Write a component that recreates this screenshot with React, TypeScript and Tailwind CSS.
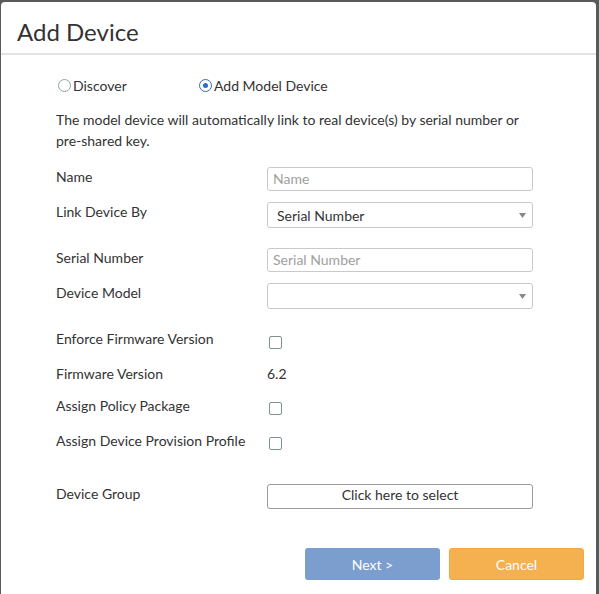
import { useState } from "react";

// Add Device dialog: pick discovery mode, then fill in model device details.

function Radio({ checked, label, onClick }: { checked: boolean; label: string; onClick: () => void }) {
  return (
    <button type="button" onClick={onClick} className="flex items-center h-5 cursor-pointer">
      <span
        className={
          checked
            ? "ml-[2px] w-[13px] h-[13px] rounded-full border-[1.5px] border-[#2f6bc8] flex items-center justify-center"
            : "ml-[2px] w-[13px] h-[13px] rounded-full border-[1.5px] border-[#8fa3a1] flex items-center justify-center"
        }
      >
        {checked && <span className="w-[5px] h-[5px] rounded-full bg-[#2f6bc8]" />}
      </span>
      <span className="ml-[2px] text-[14px] text-[#333]">{label}</span>
    </button>
  );
}

function Checkbox({ className }: { className: string }) {
  const [on, setOn] = useState(false);
  return (
    <button
      type="button"
      onClick={() => setOn(!on)}
      className={`ml-[2px] w-[13px] h-[13px] rounded-[2px] border-[1.5px] border-[#7d9391] bg-white ${className}`}
    >
      {on && <span className="block w-full h-full bg-[#2f6bc8]" />}
    </button>
  );
}

function Caret() {
  return (
    <svg width="7" height="5" viewBox="0 0 7 5" className="mr-[6px]">
      <path d="M0 0h7L3.5 5z" fill="#888" />
    </svg>
  );
}

export default function App() {
  const [mode, setMode] = useState<"discover" | "model">("model");

  return (
    <div className="w-[599px] h-[594px] bg-[#5a5a5a] pt-[2px] pl-[1px] overflow-hidden" style={{ fontFamily: "Lato, 'Noto Sans', sans-serif" }}>
      <div className="w-[595px] h-[600px] bg-white rounded-t-[4px] flex flex-col">
        {/* Header */}
        <div className="h-[53px] pt-[9px] px-4 flex items-center border-b-[2px] border-[#e3e3e3]">
          <h1 className="text-[24px] text-[#333] leading-none">Add Device</h1>
        </div>

        {/* Body */}
        <div className="pl-[55px] flex flex-col text-[14px] text-[#333]">
          <div className="mt-[20px] flex items-center">
            <div className="w-[141px]">
              <Radio checked={mode === "discover"} label="Discover" onClick={() => setMode("discover")} />
            </div>
            <Radio checked={mode === "model"} label="Add Model Device" onClick={() => setMode("model")} />
          </div>

          <p className="mt-[14px] w-[478px] leading-[21px]">
            The model device will automatically link to real device(s) by serial number or{" "}
            <span className="whitespace-nowrap">pre-shared</span> key.
          </p>

          <div className="mt-[16px] flex items-start h-6">
            <span className="w-[211px] pt-[1px] leading-[18px]">Name</span>
            <input
              placeholder="Name"
              className="w-[266px] h-6 px-[5px] pb-[2px] border border-[#c9c9c9] rounded-[3px] text-[14px] text-[#333] placeholder:text-[#a0a0a0] outline-none"
            />
          </div>

          <div className="mt-[11px] flex items-start h-[26px]">
            <span className="w-[211px] pt-[1px] leading-[18px]">Link Device By</span>
            <div className="w-[266px] h-[26px] pl-[9px] border border-[#c9c9c9] rounded-[3px] flex items-center justify-between">
              <span>Serial Number</span>
              <Caret />
            </div>
          </div>

          <div className="mt-[20px] flex items-start h-6">
            <span className="w-[211px] pt-[1px] leading-[18px]">Serial Number</span>
            <input
              placeholder="Serial Number"
              className="w-[266px] h-6 px-[5px] pb-[2px] border border-[#c9c9c9] rounded-[3px] text-[14px] text-[#333] placeholder:text-[#a0a0a0] outline-none"
            />
          </div>

          <div className="mt-[11px] flex items-start h-[26px]">
            <span className="w-[211px] pt-[1px] leading-[18px]">Device Model</span>
            <div className="w-[266px] h-[26px] pl-[10px] border border-[#c9c9c9] rounded-[3px] flex items-center justify-end">
              <Caret />
            </div>
          </div>

          <div className="mt-[21px] flex items-start h-[18px]">
            <span className="w-[211px] leading-[18px]">Enforce Firmware Version</span>
            <Checkbox className="mt-[6px]" />
          </div>

          <div className="mt-[17px] flex items-start h-[18px]">
            <span className="w-[211px] leading-[18px]">Firmware Version</span>
            <span className="leading-[18px]">6.2</span>
          </div>

          <div className="mt-[14px] flex items-start h-[18px]">
            <span className="w-[211px] leading-[18px]">Assign Policy Package</span>
            <Checkbox className="mt-[5px]" />
          </div>

          <div className="mt-[17px] flex items-start h-[18px]">
            <span className="w-[211px] leading-[18px]">Assign Device Provision Profile</span>
            <Checkbox className="mt-[5px]" />
          </div>

          <div className="mt-[34px] flex items-start h-[25px]">
            <span className="w-[211px] pt-[1px] leading-[18px]">Device Group</span>
            <button
              type="button"
              className="w-[266px] h-[25px] pb-[4px] border border-[#9a9a9a] rounded-[3px] text-[14px] text-[#333] flex items-center justify-center"
            >
              Click here to select
            </button>
          </div>
        </div>

        {/* Footer buttons */}
        <div className="mt-[39px] pr-[12px] flex justify-end gap-[9px]">
          <button type="button" className="w-[135px] h-[32px] rounded-[3px] bg-[#7b9ece] text-white text-[14px]">
            Next &gt;
          </button>
          <button type="button" className="w-[135px] h-[32px] rounded-[3px] bg-[#f5b04f] border border-[#f2a93f] text-white text-[14px]">
            Cancel
          </button>
        </div>
      </div>
    </div>
  );
}
